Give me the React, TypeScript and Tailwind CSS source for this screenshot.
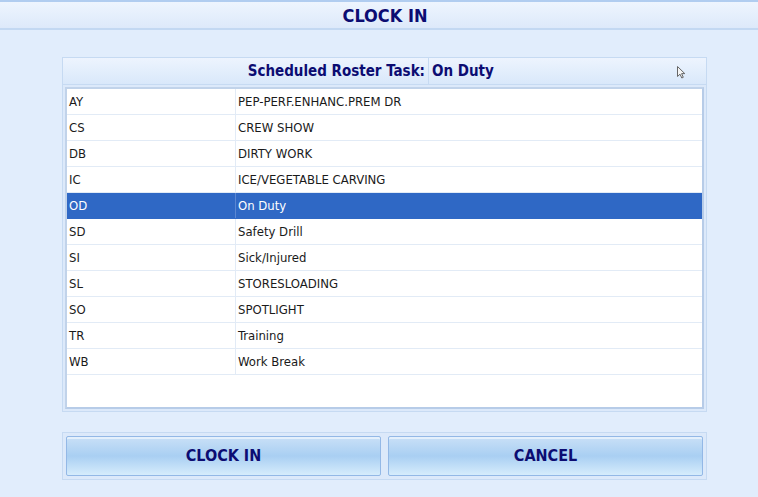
import React from "react";

const rows: [string, string][] = [
  ["AY", "PEP-PERF.ENHANC.PREM DR"],
  ["CS", "CREW SHOW"],
  ["DB", "DIRTY WORK"],
  ["IC", "ICE/VEGETABLE CARVING"],
  ["OD", "On Duty"],
  ["SD", "Safety Drill"],
  ["SI", "Sick/Injured"],
  ["SL", "STORESLOADING"],
  ["SO", "SPOTLIGHT"],
  ["TR", "Training"],
  ["WB", "Work Break"],
];

function Btn({ label }: { label: string }) {
  return (
    <button className="flex-1 h-[40px] border border-[#93b8e6] rounded-[2px] bg-gradient-to-b from-[#c9e0f7] via-[#a9cff2] to-[#d6ecfc] shadow-[inset_0_2px_0_#e4f0fc] flex items-center justify-center text-[16px] font-bold text-[#0c0c72]">
      {label}
    </button>
  );
}

export default function App() {
  return (
    <div
      className="w-[758px] h-[497px] bg-[#e1edfc] flex flex-col overflow-hidden"
      style={{ fontFamily: '"DejaVu Sans Condensed", "DejaVu Sans", sans-serif' }}
    >
      <div className="h-[30px] border-t-2 border-b-2 border-t-[#b1cdf0] border-b-[#c3d8f2] bg-gradient-to-b from-[#eef5fe] to-[#dde9fa] flex items-center justify-center pl-[12px]">
        <span className="text-[18px] font-bold text-[#0c0c72] mt-[1px]">CLOCK IN</span>
      </div>

      <div className="px-[62px] pt-[27px] pr-[51px]">
        <div className="border border-[#c6daf2] bg-[#dce9fa] flex flex-col">
          <div className="h-[27px] flex bg-gradient-to-b from-[#edf4fe] to-[#d9e8fa] border-b border-[#c6daf2]">
            <div className="w-[366px] border-r border-[#c6daf2] flex items-center justify-end pr-[3px] text-[15px] font-bold text-[#0c0c72]">
              Scheduled Roster Task:
            </div>
            <div className="flex-1 flex items-center pl-[3px] text-[15px] font-bold text-[#0c0c72] relative">
              On Duty
              <svg className="absolute left-[248px] top-[8px]" width="9" height="13" viewBox="0 0 9 13">
                <path d="M0.5 0.5 L0.5 10.5 L3 8.2 L4.8 12 L6.3 11.3 L4.6 7.6 L7.8 7.6 Z" fill="#f4f4f4" stroke="#666" strokeWidth="1" />
              </svg>
            </div>
          </div>
          <div className="p-[2px]">
            <div className="h-[322px] bg-white border-[2px] border-[#c1d3ea] border-r-[#b7cce8] border-b-[#b7cce8] flex flex-col">
              {rows.map(([code, name]) => {
                const sel = code === "OD";
                return (
                  <div
                    key={code}
                    className={`h-[26px] flex text-[13px] border-b ${
                      sel ? "bg-[#2f68c5] text-white border-[#2f68c5]" : "text-[#1a1a1a] border-[#e2ebf6]"
                    }`}
                  >
                    <div className={`w-[169px] pl-[2px] pt-[1px] flex items-center border-r ${sel ? "border-[#5b87d2]" : "border-[#e2ebf6]"}`}>
                      {code}
                    </div>
                    <div className="flex-1 pl-[2px] pt-[1px] flex items-center">{name}</div>
                  </div>
                );
              })}
            </div>
          </div>
        </div>

        <div className="mt-[20px] border border-[#c6daf2] bg-[#dce9fa] p-[3px] flex gap-[7px] relative">
          <Btn label="CLOCK IN" />
          <Btn label="CANCEL" />
        </div>
      </div>
    </div>
  );
}
